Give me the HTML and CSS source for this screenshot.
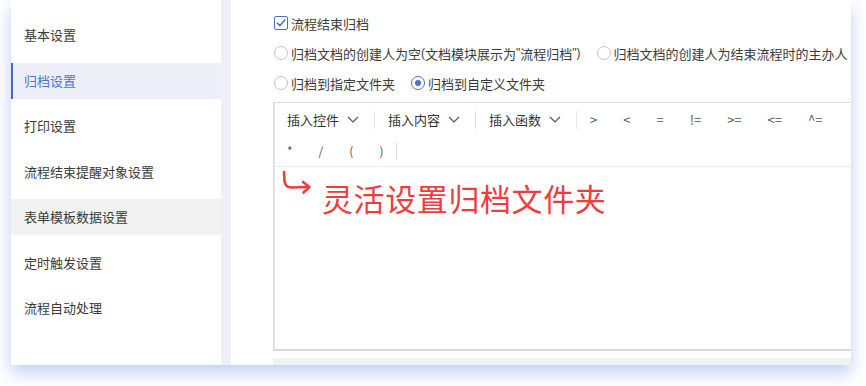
FILE: index.html
```html
<!DOCTYPE html>
<html lang="zh-CN">
<head>
  <meta charset="UTF-8" />
  <title>归档设置</title>
  <link rel="stylesheet" href="styles.css">
</head>
<body>
  <div class="frame">
    <!-- 左侧菜单 -->
    <ul class="side-menu">
      <li class="menu-item">基本设置</li>
      <li class="menu-item active">归档设置</li>
      <li class="menu-item">打印设置</li>
      <li class="menu-item">流程结束提醒对象设置</li>
      <li class="menu-item hover">表单模板数据设置</li>
      <li class="menu-item">定时触发设置</li>
      <li class="menu-item">流程自动处理</li>
    </ul>

    <div class="divider"></div>

    <!-- 归档设置内容 -->
    <div class="main">
      <div class="opt-row">
        <label class="opt">
          <span class="checkbox checked">
            <svg viewBox="0 0 14 14" width="12" height="12"><polyline points="2.5,7 5.8,10 11.5,3.5" fill="none" stroke="#4e6fcb" stroke-width="1.8" stroke-linecap="round" stroke-linejoin="round"/></svg>
          </span>
          流程结束归档
        </label>
      </div>
      <div class="opt-row">
        <label class="opt"><span class="radio"></span>归档文档的创建人为空<span class="asc">(</span>文档模块展示为<span class="asc">"</span>流程归档<span class="asc">")</span></label>
        <label class="opt"><span class="radio"></span>归档文档的创建人为结束流程时的主办人</label>
      </div>
      <div class="opt-row">
        <label class="opt"><span class="radio"></span>归档到指定文件夹</label>
        <label class="opt"><span class="radio checked"></span>归档到自定义文件夹</label>
      </div>

      <div class="editor">
        <div class="toolbar">
          <div class="tool-row">
            <span class="tool drop">插入控件 <svg class="chev" viewBox="0 0 12 7" width="12" height="7"><polyline points="1,1 6,6 11,1" fill="none" stroke="#555" stroke-width="1.2"/></svg></span>
            <i class="sep"></i>
            <span class="tool drop">插入内容 <svg class="chev" viewBox="0 0 12 7" width="12" height="7"><polyline points="1,1 6,6 11,1" fill="none" stroke="#555" stroke-width="1.2"/></svg></span>
            <i class="sep"></i>
            <span class="tool drop">插入函数 <svg class="chev" viewBox="0 0 12 7" width="12" height="7"><polyline points="1,1 6,6 11,1" fill="none" stroke="#555" stroke-width="1.2"/></svg></span>
            <i class="sep"></i>
            <span class="tool op op-lg">&gt;</span>
            <span class="tool op op-lg">&lt;</span>
            <span class="tool op op-lg">=</span>
            <span class="tool op op-lg">!=</span>
            <span class="tool op op-lg">&gt;=</span>
            <span class="tool op op-lg">&lt;=</span>
            <span class="tool op op-lg">^=</span>
          </div>
          <div class="tool-row">
            <span class="tool op">*</span>
            <span class="tool op">/</span>
            <span class="tool op">(</span>
            <span class="tool op">)</span>
            <i class="sep"></i>
          </div>
        </div>
        <div class="editor-body">
          <svg class="hook" viewBox="0 0 32 28" width="32" height="28">
            <path d="M3 2 L3.5 11 Q4 17.5 11 17.5 L27 17" fill="none" stroke="#f03c3c" stroke-width="2.6" stroke-linecap="round" stroke-linejoin="round"/>
            <path d="M22 12 L28.5 17 L22.5 22.5" fill="none" stroke="#f03c3c" stroke-width="2.6" stroke-linecap="round" stroke-linejoin="round"/>
          </svg>
          <span class="tip">灵活设置归档文件夹</span>
        </div>
      </div>
      <div class="under-bar"></div>
    </div>
  </div>
</body>
</html>
```

FILE: styles.css
```css
body {
  margin: 0;
  padding-bottom: 21px;
  background: #fff;
  font-family: "Noto Sans CJK SC", "Noto Sans", sans-serif;
  font-size: 13px;
  color: #333;
}

.frame {
  display: flex;
  margin-left: 11px;
  width: 840px;
  height: 365px;
  overflow: hidden;
  background: #fff;
  box-shadow: 0 8px 16px rgba(110, 150, 222, 0.45);
}

/* left menu */
.side-menu {
  list-style: none;
  margin: 0;
  padding: 17px 0 0;
  width: 210px;
  flex-shrink: 0;
  display: flex;
  flex-direction: column;
  gap: 9.5px;
}

.menu-item {
  height: 36px;
  line-height: 36px;
  padding-left: 11px;
  border-left: 2px solid transparent;
  color: #3a3a3a;
}

.menu-item.active {
  background: #eceff8;
  border-left-color: #4a68c6;
  color: #5272cc;
}

.menu-item.hover {
  background: #f2f2f2;
}

.divider {
  width: 10px;
  flex-shrink: 0;
  background: #edf0f7;
}

/* main panel */
.main {
  flex: 1;
  overflow: hidden;
  padding: 8px 0 0 42px;
}

.opt-row {
  display: flex;
  align-items: center;
  height: 30px;
}

.opt {
  display: flex;
  align-items: center;
  margin-right: 15px;
  white-space: nowrap;
  color: #3a3a3a;
}

.asc {
  font-family: "Liberation Sans", sans-serif;
  font-size: 12px;
}

.checkbox {
  width: 12px;
  height: 12px;
  margin: 0 3px 0 1px;
  border: 1px solid #4e6fcb;
  border-radius: 2px;
  display: flex;
  align-items: center;
  justify-content: center;
}

.radio {
  width: 12px;
  height: 12px;
  margin: 0 3px 0 1px;
  border: 1px solid #c4c4c4;
  border-radius: 50%;
  display: flex;
  align-items: center;
  justify-content: center;
}

.radio.checked {
  border-color: #4e6fcb;
}

.radio.checked::after {
  content: "";
  width: 6px;
  height: 6px;
  border-radius: 50%;
  background: #4e6fcb;
}

/* formula editor */
.editor {
  margin-top: 4px;
  width: 640px;
  height: 246px;
  border: 1px solid #dcdcdc;
  border-bottom: 2px solid #dadada;
  box-shadow: inset 1px 0 0 #e6e6e6;
}

.toolbar {
  border-bottom: 1px solid #ececec;
  padding-top: 1px;
}

.tool-row {
  display: flex;
  align-items: center;
  height: 31px;
}

.tool {
  padding: 0 13px;
  display: flex;
  align-items: center;
  white-space: nowrap;
}

.drop {
  padding: 0 15px 0 13px;
  color: #333;
}

.chev {
  margin-left: 8px;
}

.op {
  font-size: 12px;
  color: #555;
}

.op-lg {
  padding: 0 13px;
  font-size: 13px;
}

.sep {
  width: 1px;
  height: 18px;
  background: #e6e6e6;
}

.editor-body {
  display: flex;
  align-items: flex-start;
  padding: 3px 0 0 7px;
}

.tip {
  margin: 12px 0 0 9px;
  font-size: 31px;
  line-height: 31px;
  letter-spacing: 0.6px;
  color: #f03c3c;
}

.under-bar {
  margin-top: 7px;
  width: 640px;
  height: 10px;
  background: #f2f2f2;
}
```
